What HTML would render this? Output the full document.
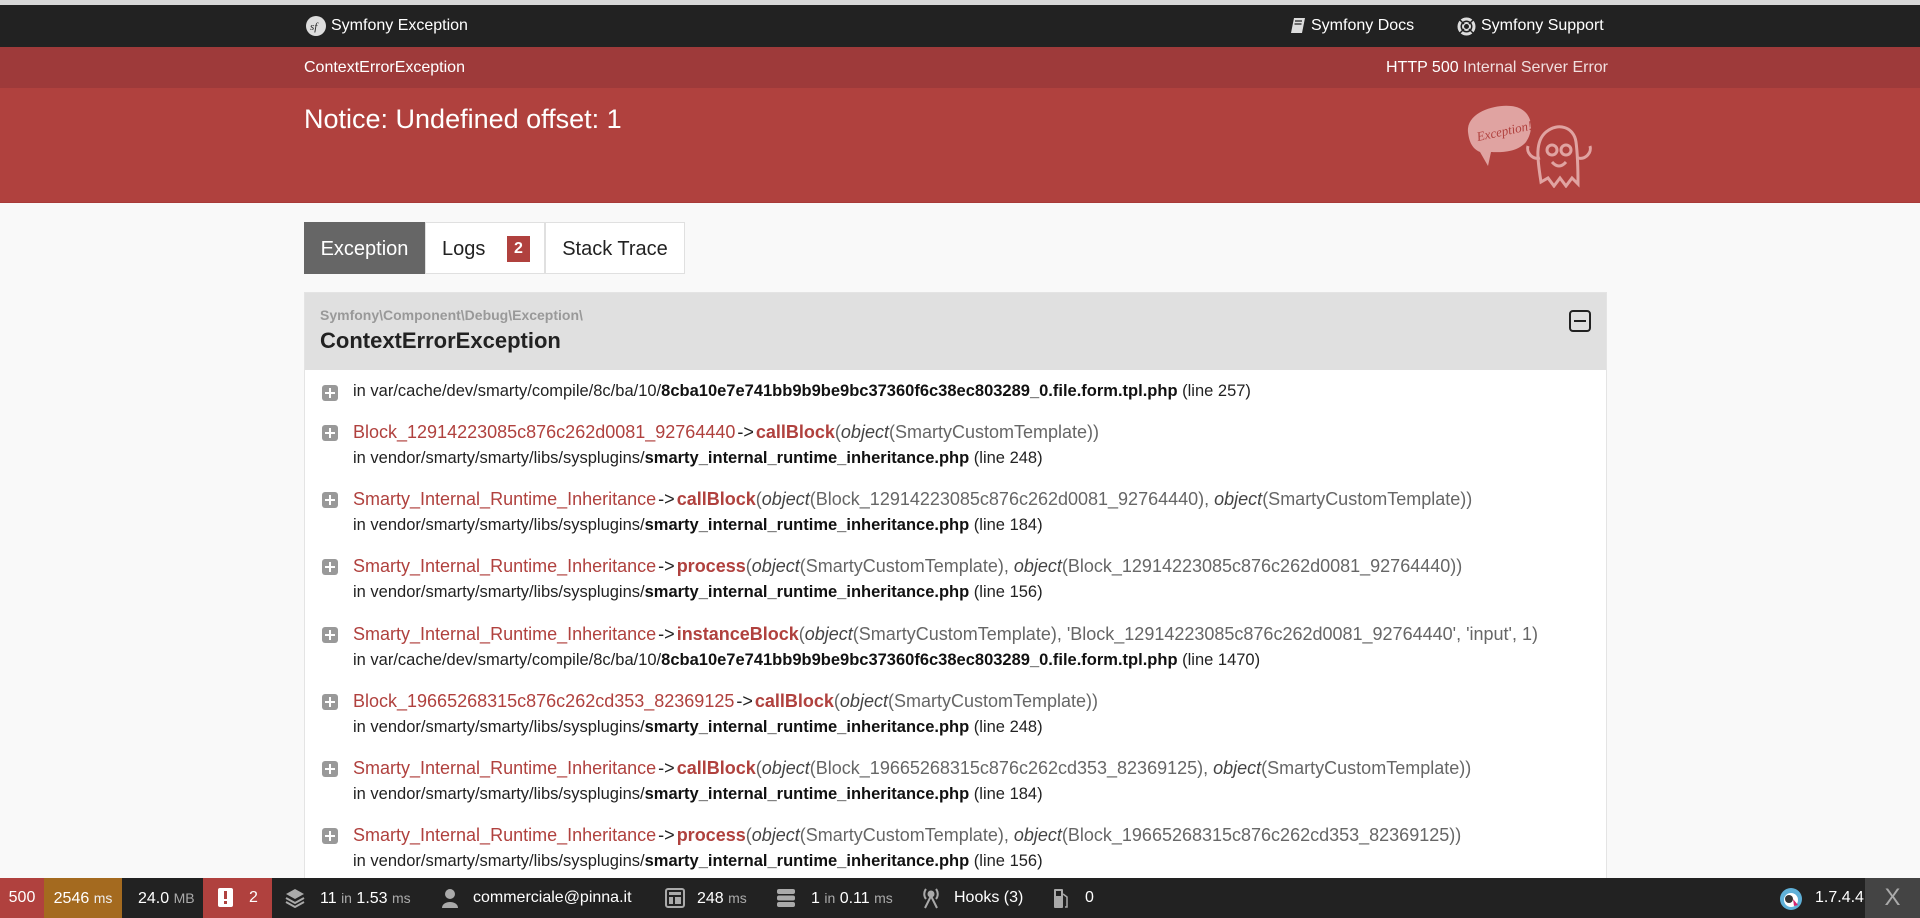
<!DOCTYPE html>
<html style="overflow:hidden;width:1920px;height:918px"><head><meta charset="utf-8"><style>
*{margin:0;padding:0;box-sizing:border-box}
body{width:1920px;height:918px;overflow:hidden;background:#f9f9f9;font-family:"Liberation Sans",Arial,sans-serif;position:relative;color:#222}
.abs{position:absolute}
.top{left:0;top:0;width:1920px;height:5px;background:#d8d8d8}
.bar{left:0;top:5px;width:1920px;height:42px;background:#222;color:#fff;font-size:16px}
.sub{left:0;top:47px;width:1920px;height:41px;background:#9e3a3a;color:#f0dede;font-size:16px}
.hero{left:0;top:88px;width:1920px;height:115px;background:#b0413e;border-bottom:1px solid #a83a38}
.tab{top:222px;height:52px;font-size:20px;line-height:52px;text-align:center;border:1px solid #e0e0e0;background:#fff;color:#222}
.block{left:304px;top:292px;width:1303px;height:626px;background:#fff;border:1px solid #e4e4e4;overflow:hidden}
.bh{left:0;top:0;width:1303px;height:77px;background:#e0e0e0}
.row{left:48px;white-space:nowrap}
.l1{font-size:18px;color:#666}
.l2{font-size:16.5px;color:#222}
.r{color:#b0413e}
.rb{color:#b0413e;font-weight:bold}
.ar{color:#222;margin:0 2px}
.i{font-style:italic;color:#444}
.b{font-weight:bold;color:#111}
.plus{left:17px;width:16px;height:16px;background:#999;border-radius:3px}
.plus:before{content:"";position:absolute;left:3px;top:7px;width:10px;height:2px;background:#fff}
.plus:after{content:"";position:absolute;left:7px;top:3px;width:2px;height:10px;background:#fff}
.tb{left:0;top:878px;width:1920px;height:40px;background:#222;color:#fff;font-size:16px;line-height:40px}
.tb span.g{color:#aaa;font-size:14px}
</style></head><body>
<div class="abs top"></div>
<div class="abs bar">
 <svg class="abs" style="left:306px;top:11px" width="20" height="20"><circle cx="10" cy="10" r="10" fill="#ddd"/><text x="4" y="14" font-size="11" font-style="italic" font-family="Liberation Serif" fill="#222">sf</text></svg>
 <div class="abs" style="left:331px;top:12px">Symfony Exception</div>
 <svg class="abs" style="left:1290px;top:12px" width="16" height="18"><path d="M4 1h11l-3 15H1z" fill="#ddd"/><path d="M5 4h7M4.5 7h7" stroke="#222" stroke-width="1.3"/></svg>
 <div class="abs" style="left:1311px;top:12px">Symfony Docs</div>
 <svg class="abs" style="left:1457px;top:12px" width="19" height="19"><circle cx="9.5" cy="9.5" r="7.5" fill="none" stroke="#ddd" stroke-width="3"/><circle cx="9.5" cy="9.5" r="3.5" fill="none" stroke="#ddd" stroke-width="2"/><path d="M3 3l4 4M16 3l-4 4M3 16l4-4M16 16l-4-4" stroke="#222" stroke-width="1.5"/></svg>
 <div class="abs" style="left:1481px;top:12px">Symfony Support</div>
</div>
<div class="abs sub">
 <div class="abs" style="left:304px;top:12px;color:#fff">ContextErrorException</div>
 <div class="abs" style="left:1378px;top:12px;width:230px;text-align:right"><span style="color:#fff">HTTP 500</span> Internal Server Error</div>
</div>
<div class="abs hero">
 <div class="abs" style="left:304px;top:16px;font-size:27px;color:#fff">Notice: Undefined offset: 1</div>
 <svg class="abs" style="left:1466px;top:14px" width="142" height="86" fill="none" stroke="#e0a3a1" stroke-width="3">
  <path d="M2 30 C0 10 30 2 45 4 C65 6 70 25 60 40 C50 52 30 50 25 50 L22 64 L14 50 C5 46 3 38 2 30Z" fill="#e0a3a1" stroke="none"/>
  <text x="10" y="34" font-size="13" font-style="italic" font-family="Liberation Serif" fill="#b0413e" stroke="none" transform="rotate(-12 35 28)">Exception!</text>
  <path d="M75 80 C72 60 68 40 80 30 C92 20 108 25 110 40 C112 55 112 70 112 82 L106 76 L100 84 L94 76 L88 84 L82 76Z"/>
  <circle cx="86" cy="48" r="5"/><circle cx="100" cy="48" r="5"/><path d="M86 60 Q93 68 100 60"/>
  <path d="M74 56 C66 58 60 50 62 44 M112 56 C120 58 126 50 124 44"/>
 </svg>
</div>
<div class="abs tab" style="left:304px;width:121px;background:#666;color:#fff;border-color:#666">Exception</div>
<div class="abs tab" style="left:425px;width:120px;text-align:left;padding-left:16px">Logs <span style="display:inline-block;background:#b0413e;color:#fff;font-size:16px;font-weight:bold;line-height:26px;width:23px;text-align:center;margin-left:16px;vertical-align:2px">2</span></div>
<div class="abs tab" style="left:545px;width:140px">Stack Trace</div>
<div class="abs block">
 <div class="abs bh">
  <div class="abs" style="left:15px;top:14px;font-size:14px;font-weight:bold;color:#999">Symfony\Component\Debug\Exception\</div>
  <div class="abs" style="left:15px;top:35px;font-size:22px;font-weight:bold;color:#222">ContextErrorException</div>
  <div class="abs" style="left:1264px;top:17px;width:22px;height:22px;border:2px solid #222;border-radius:4px"><div style="position:absolute;left:3px;top:8px;width:12px;height:2px;background:#222"></div></div>
 </div>
 <div class="abs plus" style="top:92px"></div>
 <div class="abs row l2" style="top:89px">in var/cache/dev/smarty/compile/8c/ba/10/<span class="b">8cba10e7e741bb9b9be9bc37360f6c38ec803289_0.file.form.tpl.php</span> (line 257)</div>

 <div class="abs plus" style="top:132px"></div>
 <div class="abs row l1" style="top:129px"><span class="r">Block_12914223085c876c262d0081_92764440</span><span class="ar">-&gt;</span><span class="rb">callBlock</span>(<span class="i">object</span>(SmartyCustomTemplate))</div>
 <div class="abs row l2" style="top:156px">in vendor/smarty/smarty/libs/sysplugins/<span class="b">smarty_internal_runtime_inheritance.php</span> (line 248)</div>

 <div class="abs plus" style="top:199px"></div>
 <div class="abs row l1" style="top:196px"><span class="r">Smarty_Internal_Runtime_Inheritance</span><span class="ar">-&gt;</span><span class="rb">callBlock</span>(<span class="i">object</span>(Block_12914223085c876c262d0081_92764440), <span class="i">object</span>(SmartyCustomTemplate))</div>
 <div class="abs row l2" style="top:223px">in vendor/smarty/smarty/libs/sysplugins/<span class="b">smarty_internal_runtime_inheritance.php</span> (line 184)</div>

 <div class="abs plus" style="top:266px"></div>
 <div class="abs row l1" style="top:263px"><span class="r">Smarty_Internal_Runtime_Inheritance</span><span class="ar">-&gt;</span><span class="rb">process</span>(<span class="i">object</span>(SmartyCustomTemplate), <span class="i">object</span>(Block_12914223085c876c262d0081_92764440))</div>
 <div class="abs row l2" style="top:290px">in vendor/smarty/smarty/libs/sysplugins/<span class="b">smarty_internal_runtime_inheritance.php</span> (line 156)</div>

 <div class="abs plus" style="top:334px"></div>
 <div class="abs row l1" style="top:331px"><span class="r">Smarty_Internal_Runtime_Inheritance</span><span class="ar">-&gt;</span><span class="rb">instanceBlock</span>(<span class="i">object</span>(SmartyCustomTemplate), 'Block_12914223085c876c262d0081_92764440', 'input', 1)</div>
 <div class="abs row l2" style="top:358px">in var/cache/dev/smarty/compile/8c/ba/10/<span class="b">8cba10e7e741bb9b9be9bc37360f6c38ec803289_0.file.form.tpl.php</span> (line 1470)</div>

 <div class="abs plus" style="top:401px"></div>
 <div class="abs row l1" style="top:398px"><span class="r">Block_19665268315c876c262cd353_82369125</span><span class="ar">-&gt;</span><span class="rb">callBlock</span>(<span class="i">object</span>(SmartyCustomTemplate))</div>
 <div class="abs row l2" style="top:425px">in vendor/smarty/smarty/libs/sysplugins/<span class="b">smarty_internal_runtime_inheritance.php</span> (line 248)</div>

 <div class="abs plus" style="top:468px"></div>
 <div class="abs row l1" style="top:465px"><span class="r">Smarty_Internal_Runtime_Inheritance</span><span class="ar">-&gt;</span><span class="rb">callBlock</span>(<span class="i">object</span>(Block_19665268315c876c262cd353_82369125), <span class="i">object</span>(SmartyCustomTemplate))</div>
 <div class="abs row l2" style="top:492px">in vendor/smarty/smarty/libs/sysplugins/<span class="b">smarty_internal_runtime_inheritance.php</span> (line 184)</div>

 <div class="abs plus" style="top:535px"></div>
 <div class="abs row l1" style="top:532px"><span class="r">Smarty_Internal_Runtime_Inheritance</span><span class="ar">-&gt;</span><span class="rb">process</span>(<span class="i">object</span>(SmartyCustomTemplate), <span class="i">object</span>(Block_19665268315c876c262cd353_82369125))</div>
 <div class="abs row l2" style="top:559px">in vendor/smarty/smarty/libs/sysplugins/<span class="b">smarty_internal_runtime_inheritance.php</span> (line 156)</div>
</div>
<div class="abs tb">
 <div class="abs" style="left:0;width:44px;height:40px;background:#b0413e;text-align:center">500</div>
 <div class="abs" style="left:44px;width:78px;height:40px;background:#a46a1f;text-align:center">2546 <span class="g" style="color:#eee">ms</span></div>
 <div class="abs" style="left:138px">24.0 <span class="g">MB</span></div>
 <div class="abs" style="left:203px;width:69px;height:40px;background:#b0413e"><div class="abs" style="left:15px;top:10px;width:15px;height:19px;background:#fff;border-radius:2px"><div style="position:absolute;left:6px;top:3px;width:3px;height:8px;background:#b0413e"></div><div style="position:absolute;left:6px;top:13px;width:3px;height:3px;background:#b0413e"></div></div><span class="abs" style="left:46px">2</span></div>
 <svg class="abs" style="left:285px;top:10px" width="20" height="20" fill="#aaa"><path d="M10 1L19 6L10 11L1 6Z"/><path d="M1 10l9 5 9-5" fill="none" stroke="#aaa" stroke-width="2"/><path d="M1 14l9 5 9-5" fill="none" stroke="#aaa" stroke-width="2"/></svg>
 <div class="abs" style="left:320px">11 <span class="g">in</span> 1.53 <span class="g">ms</span></div>
 <svg class="abs" style="left:441px;top:10px" width="18" height="20" fill="#aaa"><circle cx="9" cy="6" r="5"/><path d="M1 20c0-8 16-8 16 0z"/></svg>
 <div class="abs" style="left:473px">commerciale@pinna.it</div>
 <svg class="abs" style="left:665px;top:10px" width="20" height="20"><rect x="1" y="1" width="18" height="18" rx="2" fill="none" stroke="#aaa" stroke-width="2"/><rect x="4" y="4" width="12" height="3" fill="#aaa"/><rect x="4" y="9" width="4" height="7" fill="#aaa"/><rect x="10" y="9" width="6" height="7" fill="#aaa"/></svg>
 <div class="abs" style="left:697px">248 <span class="g">ms</span></div>
 <svg class="abs" style="left:776px;top:11px" width="20" height="18" fill="#aaa"><rect x="1" y="0" width="18" height="5" rx="2"/><rect x="1" y="6.5" width="18" height="5" rx="2"/><rect x="1" y="13" width="18" height="5" rx="2"/></svg>
 <div class="abs" style="left:811px">1 <span class="g">in</span> 0.11 <span class="g">ms</span></div>
 <svg class="abs" style="left:919px;top:9px" width="24" height="22" fill="none" stroke="#aaa" stroke-width="2"><circle cx="12" cy="7" r="2.5" fill="#aaa"/><path d="M7 2a8 8 0 000 10M17 2a8 8 0 010 10M12 9L6 21M12 9l6 12"/></svg>
 <div class="abs" style="left:954px">Hooks (3)</div>
 <svg class="abs" style="left:1053px;top:10px" width="16" height="21" fill="#aaa"><rect x="1" y="1" width="9" height="19" rx="1"/><path d="M10 6l4 3v10h-2" fill="none" stroke="#aaa" stroke-width="1.5"/><rect x="3" y="3" width="5" height="5" fill="#222"/></svg>
 <div class="abs" style="left:1085px">0</div>
 <svg class="abs" style="left:1779px;top:9px" width="24" height="24"><circle cx="12" cy="12" r="11" fill="#5fb0d8"/><circle cx="12" cy="13" r="7" fill="#fff"/><circle cx="10" cy="12" r="4" fill="#333"/><path d="M14 12l5 6-4 1z" fill="#d6246e"/></svg>
 <div class="abs" style="left:1815px">1.7.4.4</div>
 <div class="abs" style="left:1865px;width:55px;height:40px;background:#444;text-align:center;color:#aaa;font-size:24px">X</div>
</div>
</body></html>
